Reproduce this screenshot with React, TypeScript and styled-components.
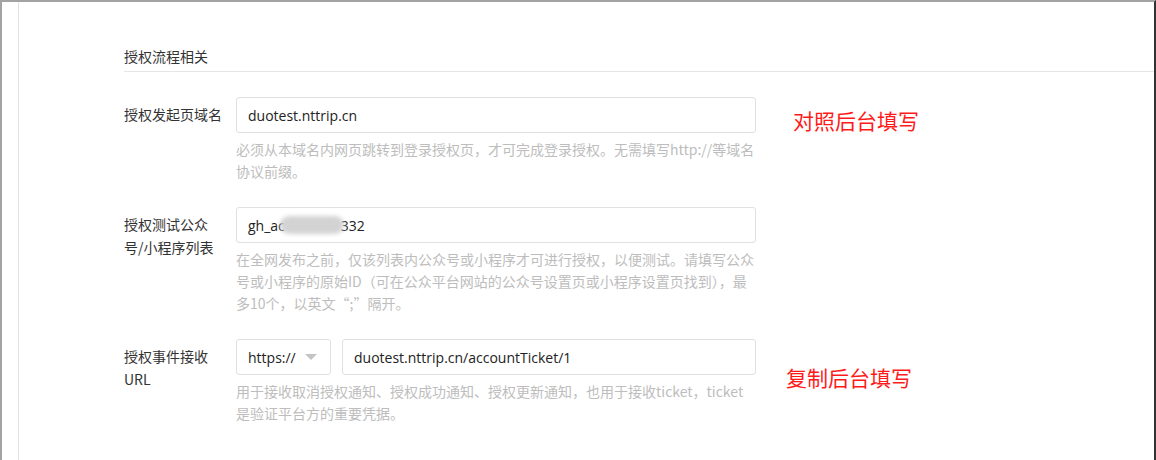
import React from "react";
import styled, { createGlobalStyle } from "styled-components";

const Global = createGlobalStyle`
  html, body { margin: 0; padding: 0; background: #fff; }
  body { font-family: "Noto Sans CJK SC", "Noto Sans", sans-serif; color: #333; }
  * { box-sizing: border-box; }
`;

const Frame = styled.div`
  display: flex;
  width: 1156px;
  height: 460px;
  border-top: 2px solid #a3a3a3;
  border-left: 2px solid #a3a3a3;
  border-right: 2px solid #333;
  overflow: hidden;
`;

const Rail = styled.div`
  width: 17px;
  flex: none;
  border-right: 1px solid #e2e2e2;
`;

const Content = styled.div`
  flex: 1;
  padding-top: 43px;
  padding-left: 105px;
`;

const SectionTitle = styled.div`
  font-size: 14px;
  line-height: 22px;
  color: #333;
  padding-bottom: 4px;
  border-bottom: 1px solid #e6e6e6;
  margin-bottom: 25px;
`;

const Row = styled.div`
  display: flex;
  align-items: flex-start;
  margin-bottom: 25px;
`;

const Label = styled.div`
  width: 112px;
  flex: none;
  padding-right: 12px;
  padding-top: 6px;
  font-size: 14px;
  line-height: 23px;
  color: #333;
`;

const Field = styled.div`
  width: 520px;
  flex: none;
  display: flex;
  flex-direction: column;
`;

const Controls = styled.div`
  display: flex;
  gap: 11px;
`;

const Box = styled.div<{ $width?: number }>`
  height: 36px;
  ${(p) => (p.$width ? `width: ${p.$width}px; flex: none;` : "flex: 1;")}
  border: 1px solid #e1e1e1;
  border-radius: 3px;
  padding: 0 11px;
  display: flex;
  align-items: center;
  font-family: "Open Sans", "Noto Sans CJK SC", sans-serif;
  font-size: 14px;
  color: #222;
  white-space: nowrap;
`;

const Blur = styled.span`
  display: inline-block;
  width: 64px;
  height: 18px;
  margin-left: -5px;
  margin-right: -3px;
  background: #d3d3d3;
  border-radius: 9px;
  filter: blur(2px);
`;

const Caret = styled.span`
  margin-left: auto;
  margin-right: 2px;
  width: 0;
  height: 0;
  border-left: 6px solid transparent;
  border-right: 6px solid transparent;
  border-top: 6px solid #c4c4c4;
`;

const Hint = styled.div`
  margin-top: 5px;
  font-size: 14px;
  line-height: 22px;
  color: #bdbdbd;
`;

const Note = styled.div<{ $left: number; $top: number }>`
  margin-left: ${(p) => p.$left}px;
  margin-top: ${(p) => p.$top}px;
  font-size: 21px;
  line-height: 28px;
  color: #ff1a1a;
  white-space: nowrap;
`;

export default function App() {
  return (
    <>
      <Global />
      <Frame>
        <Rail />
        <Content>
          <SectionTitle>授权流程相关</SectionTitle>

          <Row>
            <Label>授权发起页域名</Label>
            <Field>
              <Controls>
                <Box>duotest.nttrip.cn</Box>
              </Controls>
              <Hint>
                必须从本域名内网页跳转到登录授权页，才可完成登录授权。无需填写http://等域名协议前缀。
              </Hint>
            </Field>
            <Note $left={37} $top={9}>对照后台填写</Note>
          </Row>

          <Row>
            <Label>授权测试公众号/小程序列表</Label>
            <Field>
              <Controls>
                <Box>
                  gh_ac<Blur />332
                </Box>
              </Controls>
              <Hint>
                在全网发布之前，仅该列表内公众号或小程序才可进行授权，以便测试。请填写公众号或小程序的原始ID（可在公众平台网站的公众号设置页或小程序设置页找到），最多10个，以英文“;”隔开。
              </Hint>
            </Field>
          </Row>

          <Row>
            <Label>授权事件接收URL</Label>
            <Field>
              <Controls>
                <Box $width={95}>
                  https://
                  <Caret />
                </Box>
                <Box>duotest.nttrip.cn/accountTicket/1</Box>
              </Controls>
              <Hint>
                用于接收取消授权通知、授权成功通知、授权更新通知，也用于接收ticket，ticket是验证平台方的重要凭据。
              </Hint>
            </Field>
            <Note $left={30} $top={24}>复制后台填写</Note>
          </Row>
        </Content>
      </Frame>
    </>
  );
}
